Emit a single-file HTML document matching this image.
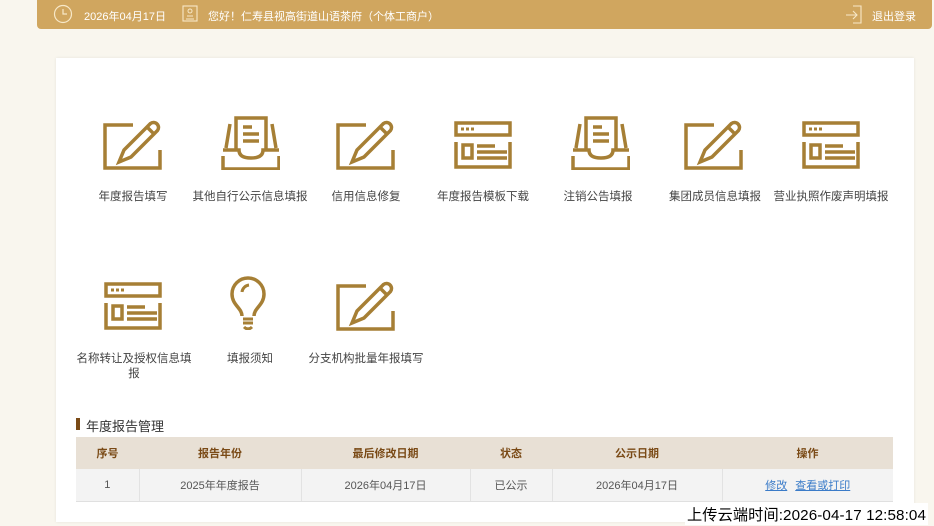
<!DOCTYPE html>
<html><head><meta charset="utf-8"><style>
*{margin:0;padding:0;box-sizing:border-box}
body{width:934px;height:526px;background:#f9f6ee;font-family:"Liberation Sans","Noto Sans CJK SC",sans-serif;position:relative;overflow:hidden}
.hdr{position:absolute;left:37px;top:0;width:895px;height:29px;background:#d0a65f;border-radius:0 0 4px 4px;color:#fff;font-size:11px}
.hdr span{position:absolute;top:8px}
.card{position:absolute;left:56px;top:58px;width:858px;height:464px;background:#fff;box-shadow:0 0 3px rgba(0,0,0,.08)}
.ic{position:absolute;width:60px;height:56px}
.ic svg{width:60px;height:56px;fill:none;stroke:#a67f35;stroke-width:3.5}
.lb{position:absolute;width:130px;text-align:center;font-size:11.5px;color:#444;line-height:15px}
.t{position:absolute;font-size:13px;color:#333}
table{position:absolute;left:76px;top:437px;width:817px;border-collapse:collapse;font-size:11px;text-align:center}
th{background:#e8e0d5;color:#7a4a16;height:32px;font-weight:bold}
td{background:#f3f3f3;color:#555;height:32px;border-left:1px solid #e2e2e2;border-bottom:1px solid #e0e0e0}
td:first-child{border-left:none}
a{color:#3a7bc8;text-decoration:underline;margin:0 4px}
</style></head><body>
<div class="hdr">
<svg style="position:absolute;left:16px;top:4px" width="20" height="20" viewBox="0 0 20 20"><circle cx="10" cy="10" r="8.5" fill="none" stroke="#f7e8c8" stroke-width="1.2"/><path d="M10 5V10H14" fill="none" stroke="#f7e8c8" stroke-width="1.2"/></svg>
<span style="left:47px">2026年04月17日</span>
<svg style="position:absolute;left:145px;top:5px" width="16" height="18" viewBox="0 0 16 18"><rect x="1" y="1" width="14" height="15" fill="none" stroke="#f7e8c8" stroke-width="1.1"/><circle cx="8" cy="6" r="2" fill="none" stroke="#f7e8c8"/><path d="M5 11H11M4 14H12" stroke="#f7e8c8"/></svg>
<span style="left:171px">您好！仁寿县视高街道山语茶府（个体工商户）</span>
<svg style="position:absolute;left:808px;top:5px" width="18" height="19" viewBox="0 0 18 19"><path d="M8 1H16V18H8" fill="none" stroke="#f7e8c8" stroke-width="1.1"/><path d="M1 10H12M8 6L12 10L8 14" fill="none" stroke="#f7e8c8" stroke-width="1.1"/></svg>
<span style="left:835px">退出登录</span>
</div>
<div class="card"></div>

<!-- row 1 -->
<div class="ic" style="left:103px;top:114px"><svg viewBox="0 0 60 56"><path d="M30 11H2V54H57V36"/><path d="M16 48L21 36L47.5 9.5A5 5 0 0 1 54.5 16.5L28 43Z M44 13L51 20"/></svg></div>
<div class="ic" style="left:220px;top:114px"><svg viewBox="0 0 60 56"><path d="M16 36V4H46V36M23 13H32M23 20H39M23 27H39M10 10L6 34M52 10L56 34M3 36H19Q19 44 31 44Q43 44 43 36H59M3 42V55H59V42"/></svg></div>
<div class="ic" style="left:336px;top:114px"><svg viewBox="0 0 60 56"><path d="M30 11H2V54H57V36"/><path d="M16 48L21 36L47.5 9.5A5 5 0 0 1 54.5 16.5L28 43Z M44 13L51 20"/></svg></div>
<div class="ic" style="left:453px;top:114px"><svg viewBox="0 0 60 56"><rect x="3" y="9" width="54" height="12"/><path d="M3 28V53H57V28M24 32H42M24 38H54M24 44H54"/><rect x="10" y="31" width="9" height="13"/><path d="M8 15H11M13 15H16M18 15H21" stroke-width="3"/></svg></div>
<div class="ic" style="left:570px;top:114px"><svg viewBox="0 0 60 56"><path d="M16 36V4H46V36M23 13H32M23 20H39M23 27H39M10 10L6 34M52 10L56 34M3 36H19Q19 44 31 44Q43 44 43 36H59M3 42V55H59V42"/></svg></div>
<div class="ic" style="left:684px;top:114px"><svg viewBox="0 0 60 56"><path d="M30 11H2V54H57V36"/><path d="M16 48L21 36L47.5 9.5A5 5 0 0 1 54.5 16.5L28 43Z M44 13L51 20"/></svg></div>
<div class="ic" style="left:801px;top:114px"><svg viewBox="0 0 60 56"><rect x="3" y="9" width="54" height="12"/><path d="M3 28V53H57V28M24 32H42M24 38H54M24 44H54"/><rect x="10" y="31" width="9" height="13"/><path d="M8 15H11M13 15H16M18 15H21" stroke-width="3"/></svg></div>

<div class="lb" style="left:68px;top:190px">年度报告填写</div>
<div class="lb" style="left:185px;top:190px">其他自行公示信息填报</div>
<div class="lb" style="left:301px;top:190px">信用信息修复</div>
<div class="lb" style="left:418px;top:190px">年度报告模板下载</div>
<div class="lb" style="left:533px;top:190px">注销公告填报</div>
<div class="lb" style="left:650px;top:190px">集团成员信息填报</div>
<div class="lb" style="left:766px;top:190px">营业执照作废声明填报</div>

<!-- row 2 -->
<div class="ic" style="left:103px;top:275px"><svg viewBox="0 0 60 56"><rect x="3" y="9" width="54" height="12"/><path d="M3 28V53H57V28M24 32H42M24 38H54M24 44H54"/><rect x="10" y="31" width="9" height="13"/><path d="M8 15H11M13 15H16M18 15H21" stroke-width="3"/></svg></div>
<div class="ic" style="left:218px;top:274px"><svg viewBox="0 0 60 56"><path d="M24 42C24 34 14 31 14 20A16 16 0 0 1 46 20C46 31 36 34 36 42"/><path d="M24 18A8 8 0 0 1 31 11M25 45H35M25 49H35M26 53Q30 57 34 53" stroke-width="3"/></svg></div>
<div class="ic" style="left:336px;top:275px"><svg viewBox="0 0 60 56"><path d="M30 11H2V54H57V36"/><path d="M16 48L21 36L47.5 9.5A5 5 0 0 1 54.5 16.5L28 43Z M44 13L51 20"/></svg></div>

<div class="lb" style="left:75px;top:352px;width:118px;word-break:break-all">名称转让及授权信息填报</div>
<div class="lb" style="left:185px;top:352px">填报须知</div>
<div class="lb" style="left:301px;top:352px">分支机构批量年报填写</div>

<div style="position:absolute;left:76px;top:418px;width:4px;height:12px;background:#7a4a16"></div>
<div class="t" style="left:86px;top:416px">年度报告管理</div>

<table>
<tr><th style="width:63px">序号</th><th style="width:162px">报告年份</th><th style="width:169px">最后修改日期</th><th style="width:82px">状态</th><th style="width:170px">公示日期</th><th>操作</th></tr>
<tr><td>1</td><td>2025年年度报告</td><td>2026年04月17日</td><td>已公示</td><td>2026年04月17日</td><td><a>修改</a><a>查看或打印</a></td></tr>
</table>
<div style="position:absolute;right:6px;top:503px;font-size:15.2px;letter-spacing:0.1px;color:#000;background:#fff;padding:0 2px">上传云端时间:2026-04-17 12:58:04</div>
</body></html>
